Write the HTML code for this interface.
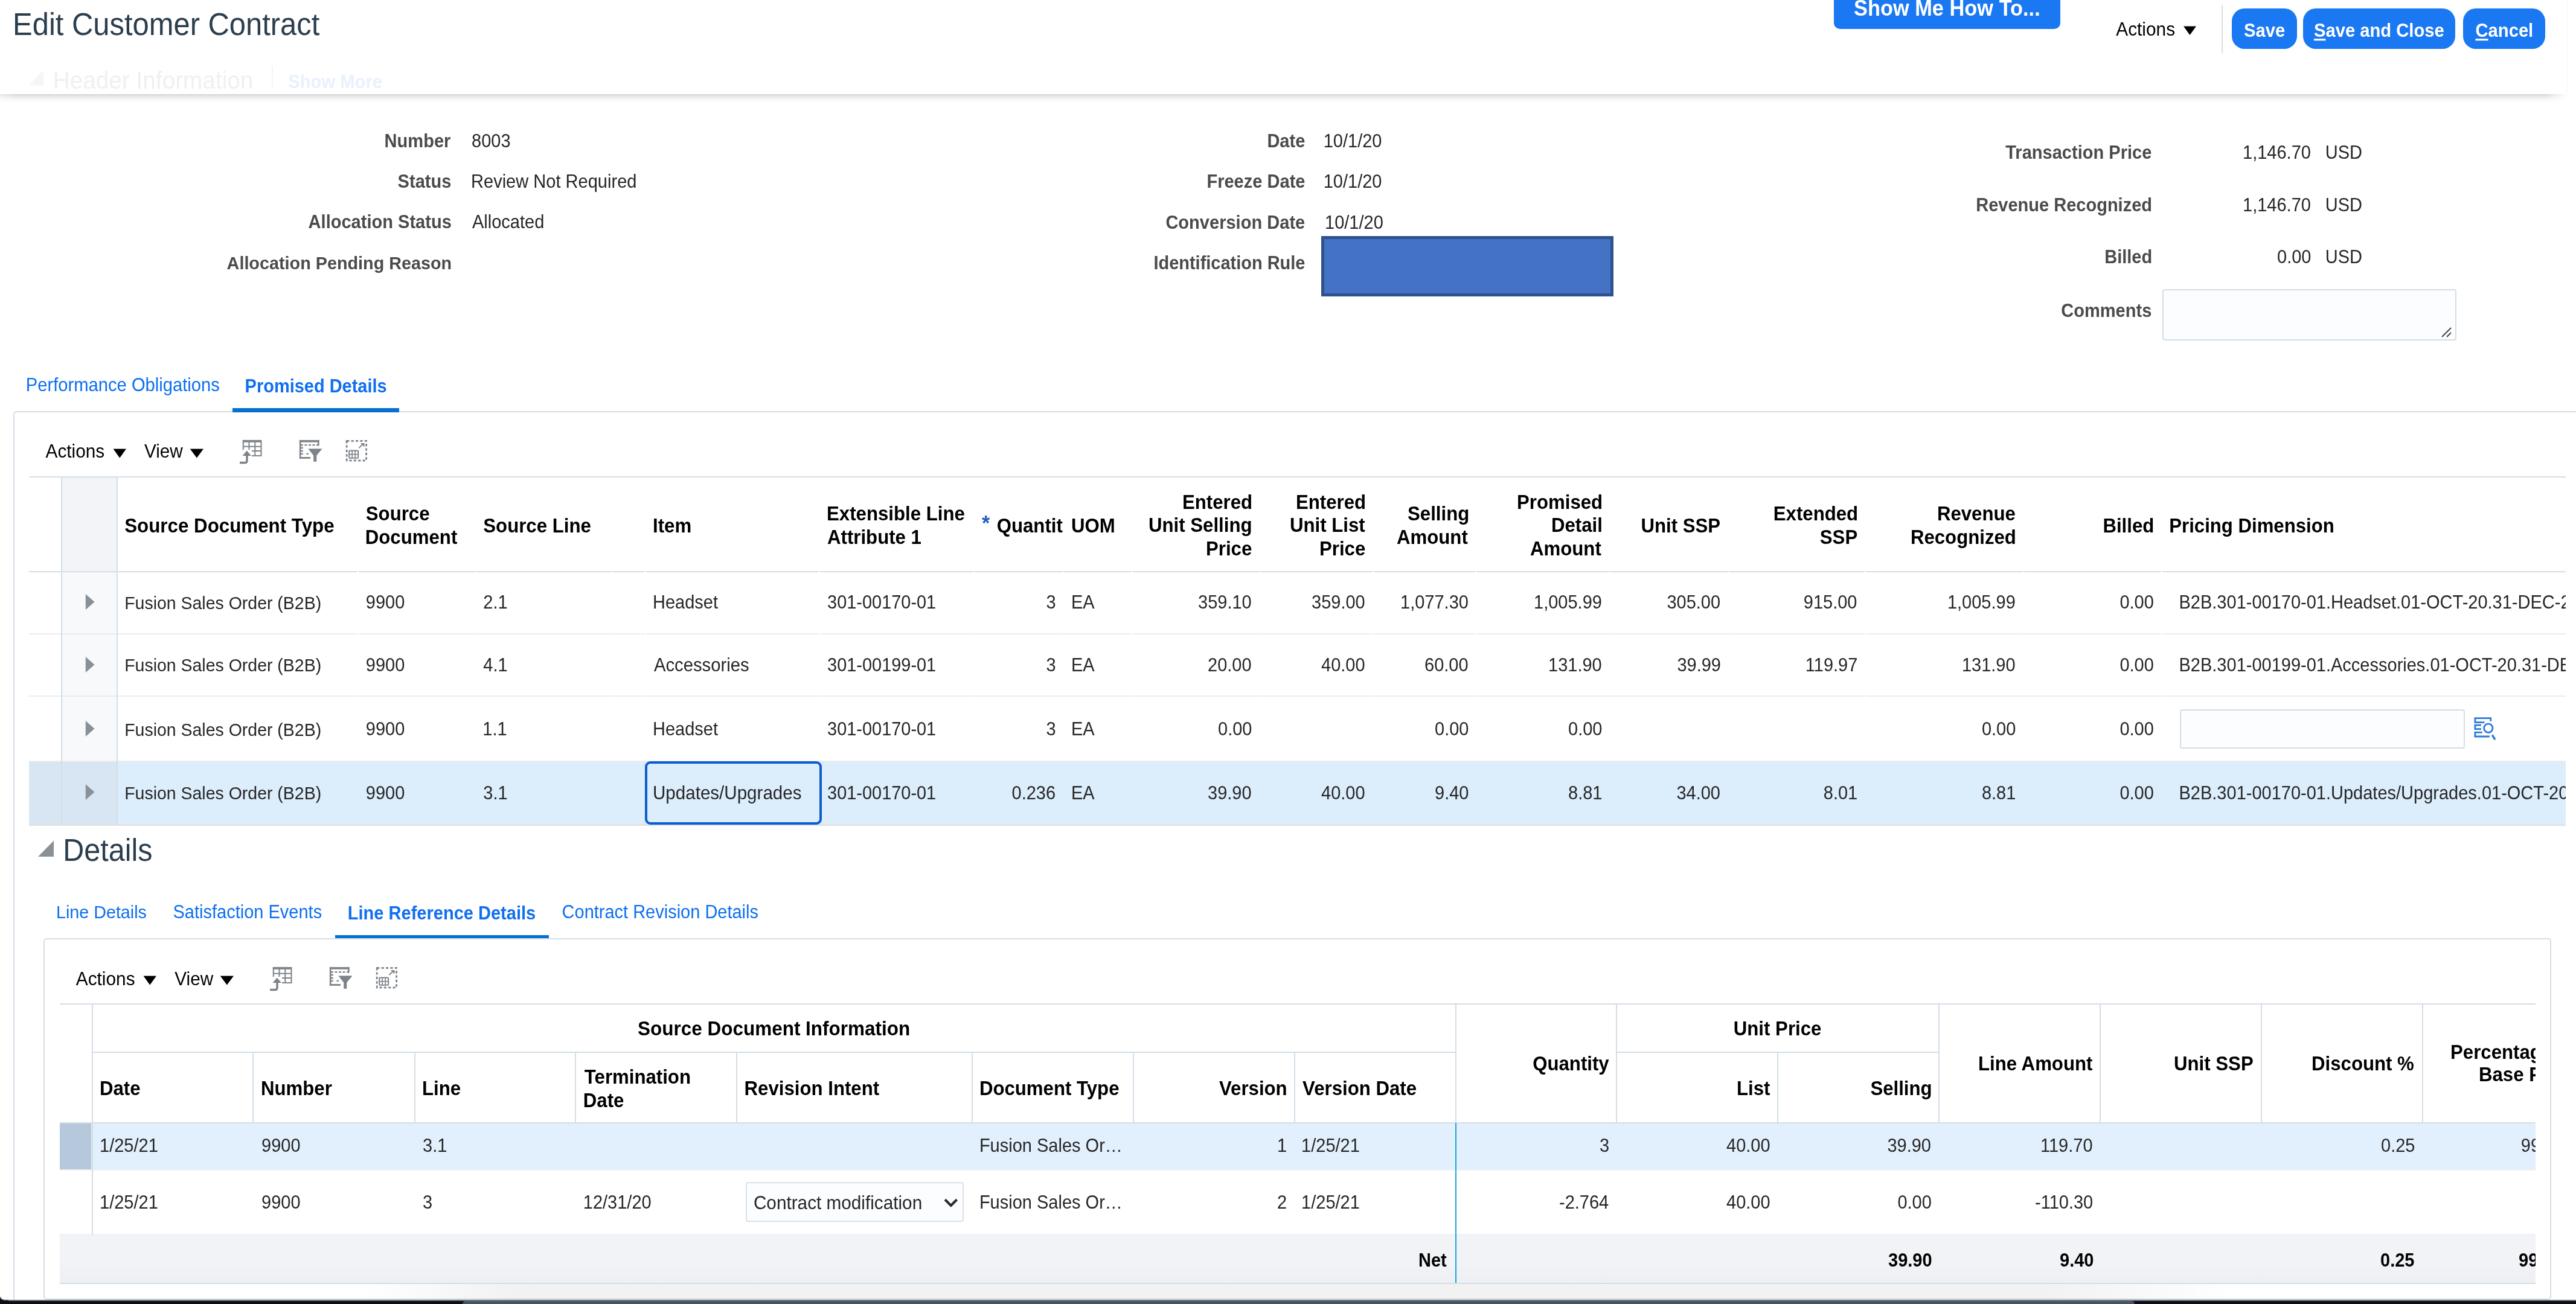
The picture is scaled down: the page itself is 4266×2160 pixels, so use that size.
<!DOCTYPE html>
<html><head><meta charset="utf-8"><title>Edit Customer Contract</title>
<style>
html,body{margin:0;padding:0;}
body{width:4266px;height:2160px;position:relative;overflow:hidden;background:#fff;font-family:"Liberation Sans", sans-serif;}
.t{position:absolute;white-space:pre;}
.r{position:absolute;}
svg.r{overflow:visible;}
</style></head><body>
<div class="t" style="top:16.60px;font-size:48.91px;line-height:48.91px;color:#2b3e4e;left:21.10px;transform:scaleY(1.055);transform-origin:0 41.40px;">Edit Customer Contract</div>
<svg class="r" style="left:0;top:0" width="500" height="160"><polygon points="47.6,141.4 72.1,116.2 72.1,141.4" fill="#f6f6f7"/></svg>
<div class="t" style="top:115.29px;font-size:38.76px;line-height:38.76px;color:#eff0f2;left:87.70px;transform:scaleY(1.055);transform-origin:0 32.81px;">Header Information</div>
<div class="r" style="left:450.00px;top:109.00px;width:2.00px;height:35.00px;background:#f3f4f6"></div>
<div class="t" style="top:122.08px;font-size:29.2px;line-height:29.2px;color:#e9f1fd;font-weight:700;left:477.30px;transform:scaleY(1.055);transform-origin:0 24.72px;">Show More</div>
<div class="r" style="left:0.00px;top:156.00px;width:4252.00px;height:14.00px;background:linear-gradient(#d3d3d4 0px,#e4e4e5 3px,#f5f5f6 8px,#ffffff 14px);-webkit-mask-image:linear-gradient(90deg,rgba(0,0,0,0.6) 0px,#000 30px,#000 4215px,rgba(0,0,0,0) 4252px)"></div>
<div class="r" style="left:4250.50px;top:0.00px;width:1.50px;height:157.00px;background:#f6f7f8"></div>
<div class="r" style="left:3037.00px;top:-12.00px;width:375.00px;height:59.70px;background:#1a78f2;border-radius:10px"></div>
<div class="t" style="top:-2.61px;font-size:34.39px;line-height:34.39px;color:#fff;font-weight:700;left:3070.00px;transform:scaleY(1.055);transform-origin:0 29.11px;">Show Me How To...</div>
<div class="t" style="top:34.26px;font-size:29.82px;line-height:29.82px;color:#000;left:3504.30px;transform:scaleY(1.055);transform-origin:0 25.24px;">Actions</div>
<svg class="r" style="left:3610px;top:40px" width="30" height="22"><polygon points="6,3.5 27,3.5 16.5,18" fill="#000"/></svg>
<div class="r" style="left:3679.00px;top:7.50px;width:2.00px;height:80.50px;background:#d6dee6"></div>
<div class="r" style="left:3696.00px;top:14.40px;width:108.00px;height:67.10px;background:#1a78f2;border-radius:21px"></div>
<div class="t" style="top:37.48px;font-size:29.2px;line-height:29.2px;color:#fff;font-weight:700;left:3716.00px;transform:scaleY(1.055);transform-origin:0 24.72px;">Save</div>
<div class="r" style="left:3814.00px;top:14.40px;width:252.00px;height:67.10px;background:#1a78f2;border-radius:21px"></div>
<div class="t" style="top:37.48px;font-size:29.2px;line-height:29.2px;color:#fff;font-weight:700;left:3832.00px;transform:scaleY(1.055);transform-origin:0 24.72px;"><span style="text-decoration:underline;text-underline-offset:3px;text-decoration-thickness:2.5px">S</span>ave and Close</div>
<div class="r" style="left:4079.00px;top:14.40px;width:136.00px;height:67.10px;background:#1a78f2;border-radius:21px"></div>
<div class="t" style="top:37.48px;font-size:29.2px;line-height:29.2px;color:#fff;font-weight:700;left:4099.50px;transform:scaleY(1.055);transform-origin:0 24.72px;"><span style="text-decoration:underline;text-underline-offset:3px;text-decoration-thickness:2.5px">C</span>ancel</div>
<div class="t" style="top:219.91px;font-size:29.05px;line-height:29.05px;color:#4b4b4b;font-weight:700;left:636.60px;transform:scaleY(1.055);transform-origin:0 24.59px;">Number</div>
<div class="t" style="top:219.95px;font-size:29.0px;line-height:29.0px;color:#262626;left:781.00px;transform:scaleY(1.055);transform-origin:0 24.55px;">8003</div>
<div class="t" style="top:286.61px;font-size:29.05px;line-height:29.05px;color:#4b4b4b;font-weight:700;left:658.60px;transform:scaleY(1.055);transform-origin:0 24.59px;">Status</div>
<div class="t" style="top:286.60px;font-size:29.06px;line-height:29.06px;color:#262626;left:780.00px;transform:scaleY(1.055);transform-origin:0 24.60px;">Review Not Required</div>
<div class="t" style="top:353.71px;font-size:29.05px;line-height:29.05px;color:#4b4b4b;font-weight:700;left:510.60px;transform:scaleY(1.055);transform-origin:0 24.59px;">Allocation Status</div>
<div class="t" style="top:353.75px;font-size:29.0px;line-height:29.0px;color:#262626;left:782.00px;transform:scaleY(1.055);transform-origin:0 24.55px;">Allocated</div>
<div class="t" style="top:421.53px;font-size:28.79px;line-height:28.79px;color:#4b4b4b;font-weight:700;left:375.60px;transform:scaleY(1.055);transform-origin:0 24.37px;">Allocation Pending Reason</div>
<div class="t" style="top:220.31px;font-size:29.05px;line-height:29.05px;color:#4b4b4b;font-weight:700;left:2098.40px;transform:scaleY(1.055);transform-origin:0 24.59px;">Date</div>
<div class="t" style="top:220.35px;font-size:29.0px;line-height:29.0px;color:#262626;left:2191.70px;transform:scaleY(1.055);transform-origin:0 24.55px;">10/1/20</div>
<div class="t" style="top:287.41px;font-size:29.05px;line-height:29.05px;color:#4b4b4b;font-weight:700;left:1998.40px;transform:scaleY(1.055);transform-origin:0 24.59px;">Freeze Date</div>
<div class="t" style="top:287.45px;font-size:29.0px;line-height:29.0px;color:#262626;left:2191.70px;transform:scaleY(1.055);transform-origin:0 24.55px;">10/1/20</div>
<div class="t" style="top:354.51px;font-size:29.05px;line-height:29.05px;color:#4b4b4b;font-weight:700;left:1930.40px;transform:scaleY(1.055);transform-origin:0 24.59px;">Conversion Date</div>
<div class="t" style="top:354.55px;font-size:29.0px;line-height:29.0px;color:#262626;left:2194.00px;transform:scaleY(1.055);transform-origin:0 24.55px;">10/1/20</div>
<div class="t" style="top:421.97px;font-size:28.98px;line-height:28.98px;color:#4b4b4b;font-weight:700;left:1910.40px;transform:scaleY(1.055);transform-origin:0 24.53px;">Identification Rule</div>
<div class="r" style="left:2188.00px;top:391.00px;width:484.00px;height:100.00px;background:#4472c4;border:5px solid #2f528f;box-sizing:border-box"></div>
<div class="t" style="top:238.71px;font-size:29.05px;line-height:29.05px;color:#4b4b4b;font-weight:700;left:3321.20px;transform:scaleY(1.055);transform-origin:0 24.59px;">Transaction Price</div>
<div class="t" style="top:238.75px;font-size:29.0px;line-height:29.0px;color:#262626;left:3714.00px;transform:scaleY(1.055);transform-origin:0 24.55px;">1,146.70</div>
<div class="t" style="top:238.75px;font-size:29.0px;line-height:29.0px;color:#262626;left:3850.70px;transform:scaleY(1.055);transform-origin:0 24.55px;">USD</div>
<div class="t" style="top:325.53px;font-size:29.03px;line-height:29.03px;color:#4b4b4b;font-weight:700;left:3272.20px;transform:scaleY(1.055);transform-origin:0 24.57px;">Revenue Recognized</div>
<div class="t" style="top:325.55px;font-size:29.0px;line-height:29.0px;color:#262626;left:3714.00px;transform:scaleY(1.055);transform-origin:0 24.55px;">1,146.70</div>
<div class="t" style="top:325.55px;font-size:29.0px;line-height:29.0px;color:#262626;left:3850.70px;transform:scaleY(1.055);transform-origin:0 24.55px;">USD</div>
<div class="t" style="top:412.31px;font-size:29.05px;line-height:29.05px;color:#4b4b4b;font-weight:700;left:3485.20px;transform:scaleY(1.055);transform-origin:0 24.59px;">Billed</div>
<div class="t" style="top:412.35px;font-size:29.0px;line-height:29.0px;color:#262626;left:3771.00px;transform:scaleY(1.055);transform-origin:0 24.55px;">0.00</div>
<div class="t" style="top:412.35px;font-size:29.0px;line-height:29.0px;color:#262626;left:3850.70px;transform:scaleY(1.055);transform-origin:0 24.55px;">USD</div>
<div class="t" style="top:500.81px;font-size:29.05px;line-height:29.05px;color:#4b4b4b;font-weight:700;left:3413.20px;transform:scaleY(1.055);transform-origin:0 24.59px;">Comments</div>
<div class="r" style="left:3581.00px;top:478.80px;width:487.00px;height:85.20px;background:#fcfdfe;border:2px solid #d4dee6;border-radius:4px;box-sizing:border-box"></div>
<svg class="r" style="left:4040px;top:538px" width="26" height="24"><line x1="4" y1="20" x2="19" y2="5" stroke="#444" stroke-width="2"/><line x1="12" y1="20" x2="19" y2="13" stroke="#444" stroke-width="2"/></svg>
<div class="t" style="top:623.80px;font-size:29.18px;line-height:29.18px;color:#0c6ff0;left:42.80px;transform:scaleY(1.055);transform-origin:0 24.70px;">Performance Obligations</div>
<div class="t" style="top:626.17px;font-size:28.98px;line-height:28.98px;color:#106ff0;font-weight:700;left:405.60px;transform:scaleY(1.055);transform-origin:0 24.53px;">Promised Details</div>
<div class="r" style="left:22.00px;top:681.00px;width:4278.00px;height:1519.00px;border:2px solid #d4dee6;border-radius:5px;box-sizing:border-box"></div>
<div class="r" style="left:384.50px;top:675.60px;width:276.50px;height:7.40px;background:#0670d0"></div>
<div class="t" style="top:733.26px;font-size:29.82px;line-height:29.82px;color:#000;left:75.50px;transform:scaleY(1.055);transform-origin:0 25.24px;">Actions</div>
<svg class="r" style="left:184px;top:740px" width="30" height="22"><polygon points="3.5,3.5 25,3.5 14.25,18.5" fill="#000"/></svg>
<div class="t" style="top:733.36px;font-size:29.7px;line-height:29.7px;color:#000;left:239.00px;transform:scaleY(1.055);transform-origin:0 25.14px;">View</div>
<svg class="r" style="left:311px;top:740px" width="30" height="22"><polygon points="3.7,3.5 26,3.5 14.85,18.5" fill="#000"/></svg>
<svg class="r" style="left:385px;top:720px" width="240" height="55">
<g fill="none" stroke="#7d838a" stroke-width="2">
<rect x="17.8" y="9.9" width="29.7" height="25" />
<line x1="27.5" y1="10" x2="27.5" y2="35"/><line x1="37.3" y1="10" x2="37.3" y2="35"/>
<line x1="18" y1="19.6" x2="47" y2="19.6"/><line x1="18" y1="27" x2="47" y2="27"/>
</g>
<rect x="16.8" y="8.9" width="30.7" height="3.8" fill="#7d838a"/>
<rect x="16" y="25" width="16" height="16" fill="#fff"/>
<path d="M12.1 46.6 H20.5 Q24 46.6 24 43 V34" fill="none" stroke="#7d838a" stroke-width="3.5"/>
<polygon points="16.5,35 23.8,26.5 31,35" fill="#7d838a"/>
<rect x="110.9" y="8.9" width="32.6" height="3.7" fill="#7d838a"/>
<rect x="141" y="8.9" width="2.6" height="9.5" fill="#7d838a"/>
<rect x="110.9" y="8.9" width="2.6" height="30.8" fill="#7d838a"/>
<rect x="110.9" y="37" width="18.1" height="2.8" fill="#7d838a"/>
<g stroke="#7d838a" stroke-width="2.2" stroke-dasharray="4,2.5">
<line x1="113" y1="17.2" x2="143" y2="17.2"/>
<line x1="113" y1="21.9" x2="119" y2="21.9"/>
<line x1="113" y1="27" x2="119" y2="27"/>
<line x1="113" y1="31.7" x2="119" y2="31.7"/>
<line x1="122.5" y1="31.7" x2="126" y2="31.7"/>
</g>
<polygon points="125.3,23.3 148.6,23.3 139.3,34.5 139.3,44.7 134.2,44.7 134.2,34.5" fill="#7d838a"/>
<rect x="189.2" y="10.4" width="32.4" height="32.4" fill="none" stroke="#7d838a" stroke-width="2.8" stroke-dasharray="4.2,3.2"/>
<rect x="193.2" y="26.4" width="15" height="12.4" rx="1.5" fill="none" stroke="#7d838a" stroke-width="2"/>
<line x1="198.2" y1="26.4" x2="198.2" y2="38.8" stroke="#7d838a" stroke-width="1.6"/>
<line x1="203.2" y1="26.4" x2="203.2" y2="38.8" stroke="#7d838a" stroke-width="1.6"/>
<line x1="193.2" y1="32.6" x2="208.2" y2="32.6" stroke="#7d838a" stroke-width="1.6"/>
<line x1="209.5" y1="22" x2="216.5" y2="15" stroke="#7d838a" stroke-width="1.8"/>
<polygon points="212,14 218.5,14 218.5,20.5" fill="#7d838a"/>
</svg>
<div class="r" style="left:48.00px;top:789.00px;width:4201.00px;height:2.00px;background:#d4dee6"></div>
<div class="r" style="left:102.00px;top:791.00px;width:92.00px;height:155.00px;background:#f3f4f7"></div>
<div class="r" style="left:102.00px;top:947.00px;width:92.00px;height:102.60px;background:#f7f9fb"></div>
<div class="r" style="left:102.00px;top:1050.60px;width:92.00px;height:102.80px;background:#f7f9fb"></div>
<div class="r" style="left:102.00px;top:1154.40px;width:92.00px;height:106.60px;background:#f7f9fb"></div>
<div class="r" style="left:48.00px;top:1262.00px;width:4201.00px;height:103.00px;background:#dcedfc"></div>
<div class="r" style="left:48.00px;top:1262.00px;width:146.00px;height:103.00px;background:#d8e6f4"></div>
<div class="r" style="left:48.00px;top:945.50px;width:4201.00px;height:2.00px;background:#d4dee6"></div>
<div class="r" style="left:48.00px;top:1048.60px;width:4201.00px;height:2.00px;background:#ebecee"></div>
<div class="r" style="left:48.00px;top:1152.40px;width:4201.00px;height:2.00px;background:#ebecee"></div>
<div class="r" style="left:48.00px;top:1260.00px;width:4201.00px;height:2.00px;background:#ebecee"></div>
<div class="r" style="left:48.00px;top:1365.00px;width:4201.00px;height:2.50px;background:#dfe3e8"></div>
<div class="r" style="left:592.00px;top:945.30px;width:1.60px;height:2.40px;background:#fff"></div>
<div class="r" style="left:592.00px;top:1048.40px;width:1.60px;height:2.40px;background:#fff"></div>
<div class="r" style="left:592.00px;top:1152.20px;width:1.60px;height:2.40px;background:#fff"></div>
<div class="r" style="left:786.50px;top:945.30px;width:1.60px;height:2.40px;background:#fff"></div>
<div class="r" style="left:786.50px;top:1048.40px;width:1.60px;height:2.40px;background:#fff"></div>
<div class="r" style="left:786.50px;top:1152.20px;width:1.60px;height:2.40px;background:#fff"></div>
<div class="r" style="left:1012.90px;top:945.30px;width:1.60px;height:2.40px;background:#fff"></div>
<div class="r" style="left:1012.90px;top:1048.40px;width:1.60px;height:2.40px;background:#fff"></div>
<div class="r" style="left:1012.90px;top:1152.20px;width:1.60px;height:2.40px;background:#fff"></div>
<div class="r" style="left:1068.40px;top:945.30px;width:1.60px;height:2.40px;background:#fff"></div>
<div class="r" style="left:1068.40px;top:1048.40px;width:1.60px;height:2.40px;background:#fff"></div>
<div class="r" style="left:1068.40px;top:1152.20px;width:1.60px;height:2.40px;background:#fff"></div>
<div class="r" style="left:1356.20px;top:945.30px;width:1.60px;height:2.40px;background:#fff"></div>
<div class="r" style="left:1356.20px;top:1048.40px;width:1.60px;height:2.40px;background:#fff"></div>
<div class="r" style="left:1356.20px;top:1152.20px;width:1.60px;height:2.40px;background:#fff"></div>
<div class="r" style="left:1611.80px;top:945.30px;width:1.60px;height:2.40px;background:#fff"></div>
<div class="r" style="left:1611.80px;top:1048.40px;width:1.60px;height:2.40px;background:#fff"></div>
<div class="r" style="left:1611.80px;top:1152.20px;width:1.60px;height:2.40px;background:#fff"></div>
<div class="r" style="left:1760.70px;top:945.30px;width:1.60px;height:2.40px;background:#fff"></div>
<div class="r" style="left:1760.70px;top:1048.40px;width:1.60px;height:2.40px;background:#fff"></div>
<div class="r" style="left:1760.70px;top:1152.20px;width:1.60px;height:2.40px;background:#fff"></div>
<div class="r" style="left:1874.20px;top:945.30px;width:1.60px;height:2.40px;background:#fff"></div>
<div class="r" style="left:1874.20px;top:1048.40px;width:1.60px;height:2.40px;background:#fff"></div>
<div class="r" style="left:1874.20px;top:1152.20px;width:1.60px;height:2.40px;background:#fff"></div>
<div class="r" style="left:2085.60px;top:945.30px;width:1.60px;height:2.40px;background:#fff"></div>
<div class="r" style="left:2085.60px;top:1048.40px;width:1.60px;height:2.40px;background:#fff"></div>
<div class="r" style="left:2085.60px;top:1152.20px;width:1.60px;height:2.40px;background:#fff"></div>
<div class="r" style="left:2273.20px;top:945.30px;width:1.60px;height:2.40px;background:#fff"></div>
<div class="r" style="left:2273.20px;top:1048.40px;width:1.60px;height:2.40px;background:#fff"></div>
<div class="r" style="left:2273.20px;top:1152.20px;width:1.60px;height:2.40px;background:#fff"></div>
<div class="r" style="left:2443.40px;top:945.30px;width:1.60px;height:2.40px;background:#fff"></div>
<div class="r" style="left:2443.40px;top:1048.40px;width:1.60px;height:2.40px;background:#fff"></div>
<div class="r" style="left:2443.40px;top:1152.20px;width:1.60px;height:2.40px;background:#fff"></div>
<div class="r" style="left:2664.70px;top:945.30px;width:1.60px;height:2.40px;background:#fff"></div>
<div class="r" style="left:2664.70px;top:1048.40px;width:1.60px;height:2.40px;background:#fff"></div>
<div class="r" style="left:2664.70px;top:1152.20px;width:1.60px;height:2.40px;background:#fff"></div>
<div class="r" style="left:2861.50px;top:945.30px;width:1.60px;height:2.40px;background:#fff"></div>
<div class="r" style="left:2861.50px;top:1048.40px;width:1.60px;height:2.40px;background:#fff"></div>
<div class="r" style="left:2861.50px;top:1152.20px;width:1.60px;height:2.40px;background:#fff"></div>
<div class="r" style="left:3088.40px;top:945.30px;width:1.60px;height:2.40px;background:#fff"></div>
<div class="r" style="left:3088.40px;top:1048.40px;width:1.60px;height:2.40px;background:#fff"></div>
<div class="r" style="left:3088.40px;top:1152.20px;width:1.60px;height:2.40px;background:#fff"></div>
<div class="r" style="left:3350.50px;top:945.30px;width:1.60px;height:2.40px;background:#fff"></div>
<div class="r" style="left:3350.50px;top:1048.40px;width:1.60px;height:2.40px;background:#fff"></div>
<div class="r" style="left:3350.50px;top:1152.20px;width:1.60px;height:2.40px;background:#fff"></div>
<div class="r" style="left:3579.00px;top:945.30px;width:1.60px;height:2.40px;background:#fff"></div>
<div class="r" style="left:3579.00px;top:1048.40px;width:1.60px;height:2.40px;background:#fff"></div>
<div class="r" style="left:3579.00px;top:1152.20px;width:1.60px;height:2.40px;background:#fff"></div>
<div class="r" style="left:101.20px;top:790.00px;width:2.00px;height:576.00px;background:#d4dee6"></div>
<div class="r" style="left:192.50px;top:790.00px;width:2.00px;height:576.00px;background:#d4dee6"></div>
<div class="t" style="top:855.79px;font-size:31.32px;line-height:31.32px;color:#000;font-weight:700;left:206.20px;transform:scaleY(1.055);transform-origin:0 26.51px;">Source Document Type</div>
<div class="t" style="top:836.09px;font-size:31.2px;line-height:31.2px;color:#000;font-weight:700;left:605.80px;transform:scaleY(1.055);transform-origin:0 26.41px;">Source</div>
<div class="t" style="top:875.09px;font-size:31.2px;line-height:31.2px;color:#000;font-weight:700;left:604.80px;transform:scaleY(1.055);transform-origin:0 26.41px;">Document</div>
<div class="t" style="top:855.89px;font-size:31.2px;line-height:31.2px;color:#000;font-weight:700;left:800.30px;transform:scaleY(1.055);transform-origin:0 26.41px;">Source Line</div>
<div class="t" style="top:855.89px;font-size:31.2px;line-height:31.2px;color:#000;font-weight:700;left:1081.00px;transform:scaleY(1.055);transform-origin:0 26.41px;">Item</div>
<div class="t" style="top:836.09px;font-size:31.2px;line-height:31.2px;color:#000;font-weight:700;left:1369.00px;transform:scaleY(1.055);transform-origin:0 26.41px;">Extensible Line</div>
<div class="t" style="top:875.09px;font-size:31.2px;line-height:31.2px;color:#000;font-weight:700;left:1370.00px;transform:scaleY(1.055);transform-origin:0 26.41px;">Attribute 1</div>
<div class="t" style="top:848.72px;font-size:34px;line-height:34px;color:#1d5fb8;font-weight:700;left:1626.00px;transform:scaleY(1.055);transform-origin:0 28.78px;">*</div>
<div class="t" style="top:855.89px;font-size:31.2px;line-height:31.2px;color:#000;font-weight:700;left:1650.70px;transform:scaleY(1.055);transform-origin:0 26.41px;">Quantit</div>
<div class="t" style="top:855.89px;font-size:31.2px;line-height:31.2px;color:#000;font-weight:700;left:1774.00px;transform:scaleY(1.055);transform-origin:0 26.41px;">UOM</div>
<div class="t" style="top:816.79px;font-size:31.2px;line-height:31.2px;color:#000;font-weight:700;left:1958.00px;transform:scaleY(1.055);transform-origin:0 26.41px;">Entered</div>
<div class="t" style="top:855.29px;font-size:31.2px;line-height:31.2px;color:#000;font-weight:700;left:1902.00px;transform:scaleY(1.055);transform-origin:0 26.41px;">Unit Selling</div>
<div class="t" style="top:893.69px;font-size:31.2px;line-height:31.2px;color:#000;font-weight:700;left:1997.00px;transform:scaleY(1.055);transform-origin:0 26.41px;">Price</div>
<div class="t" style="top:816.79px;font-size:31.2px;line-height:31.2px;color:#000;font-weight:700;left:2146.00px;transform:scaleY(1.055);transform-origin:0 26.41px;">Entered</div>
<div class="t" style="top:855.29px;font-size:31.2px;line-height:31.2px;color:#000;font-weight:700;left:2136.00px;transform:scaleY(1.055);transform-origin:0 26.41px;">Unit List</div>
<div class="t" style="top:893.69px;font-size:31.2px;line-height:31.2px;color:#000;font-weight:700;left:2185.00px;transform:scaleY(1.055);transform-origin:0 26.41px;">Price</div>
<div class="t" style="top:836.09px;font-size:31.2px;line-height:31.2px;color:#000;font-weight:700;left:2331.00px;transform:scaleY(1.055);transform-origin:0 26.41px;">Selling</div>
<div class="t" style="top:875.09px;font-size:31.2px;line-height:31.2px;color:#000;font-weight:700;left:2313.00px;transform:scaleY(1.055);transform-origin:0 26.41px;">Amount</div>
<div class="t" style="top:816.79px;font-size:31.2px;line-height:31.2px;color:#000;font-weight:700;left:2512.00px;transform:scaleY(1.055);transform-origin:0 26.41px;">Promised</div>
<div class="t" style="top:855.29px;font-size:31.2px;line-height:31.2px;color:#000;font-weight:700;left:2569.00px;transform:scaleY(1.055);transform-origin:0 26.41px;">Detail</div>
<div class="t" style="top:893.69px;font-size:31.2px;line-height:31.2px;color:#000;font-weight:700;left:2534.00px;transform:scaleY(1.055);transform-origin:0 26.41px;">Amount</div>
<div class="t" style="top:855.89px;font-size:31.2px;line-height:31.2px;color:#000;font-weight:700;left:2717.40px;transform:scaleY(1.055);transform-origin:0 26.41px;">Unit SSP</div>
<div class="t" style="top:836.09px;font-size:31.2px;line-height:31.2px;color:#000;font-weight:700;left:2936.80px;transform:scaleY(1.055);transform-origin:0 26.41px;">Extended</div>
<div class="t" style="top:875.09px;font-size:31.2px;line-height:31.2px;color:#000;font-weight:700;left:3013.80px;transform:scaleY(1.055);transform-origin:0 26.41px;">SSP</div>
<div class="t" style="top:836.09px;font-size:31.2px;line-height:31.2px;color:#000;font-weight:700;left:3207.90px;transform:scaleY(1.055);transform-origin:0 26.41px;">Revenue</div>
<div class="t" style="top:875.09px;font-size:31.2px;line-height:31.2px;color:#000;font-weight:700;left:3163.90px;transform:scaleY(1.055);transform-origin:0 26.41px;">Recognized</div>
<div class="t" style="top:855.89px;font-size:31.2px;line-height:31.2px;color:#000;font-weight:700;left:3482.40px;transform:scaleY(1.055);transform-origin:0 26.41px;">Billed</div>
<div class="t" style="top:855.93px;font-size:31.15px;line-height:31.15px;color:#000;font-weight:700;left:3592.30px;transform:scaleY(1.055);transform-origin:0 26.37px;">Pricing Dimension</div>
<div class="t" style="top:984.59px;font-size:28.48px;line-height:28.48px;color:#262626;left:206.20px;transform:scaleY(1.055);transform-origin:0 24.11px;">Fusion Sales Order (B2B)</div>
<div class="t" style="top:984.15px;font-size:29.0px;line-height:29.0px;color:#262626;left:605.80px;transform:scaleY(1.055);transform-origin:0 24.55px;">9900</div>
<div class="t" style="top:984.15px;font-size:29.0px;line-height:29.0px;color:#262626;left:800.30px;transform:scaleY(1.055);transform-origin:0 24.55px;">2.1</div>
<div class="t" style="top:984.15px;font-size:29.0px;line-height:29.0px;color:#262626;left:1081.00px;transform:scaleY(1.055);transform-origin:0 24.55px;">Headset</div>
<div class="t" style="top:984.21px;font-size:28.93px;line-height:28.93px;color:#262626;left:1370.10px;transform:scaleY(1.055);transform-origin:0 24.49px;">301-00170-01</div>
<div class="t" style="top:984.15px;font-size:29.0px;line-height:29.0px;color:#262626;left:1732.50px;transform:scaleY(1.055);transform-origin:0 24.55px;">3</div>
<div class="t" style="top:984.15px;font-size:29.0px;line-height:29.0px;color:#262626;left:1774.00px;transform:scaleY(1.055);transform-origin:0 24.55px;">EA</div>
<div class="t" style="top:984.15px;font-size:29.0px;line-height:29.0px;color:#262626;left:1984.00px;transform:scaleY(1.055);transform-origin:0 24.55px;">359.10</div>
<div class="t" style="top:984.15px;font-size:29.0px;line-height:29.0px;color:#262626;left:2172.00px;transform:scaleY(1.055);transform-origin:0 24.55px;">359.00</div>
<div class="t" style="top:984.15px;font-size:29.0px;line-height:29.0px;color:#262626;left:2319.00px;transform:scaleY(1.055);transform-origin:0 24.55px;">1,077.30</div>
<div class="t" style="top:984.15px;font-size:29.0px;line-height:29.0px;color:#262626;left:2540.00px;transform:scaleY(1.055);transform-origin:0 24.55px;">1,005.99</div>
<div class="t" style="top:984.15px;font-size:29.0px;line-height:29.0px;color:#262626;left:2760.40px;transform:scaleY(1.055);transform-origin:0 24.55px;">305.00</div>
<div class="t" style="top:984.15px;font-size:29.0px;line-height:29.0px;color:#262626;left:2986.80px;transform:scaleY(1.055);transform-origin:0 24.55px;">915.00</div>
<div class="t" style="top:984.15px;font-size:29.0px;line-height:29.0px;color:#262626;left:3224.90px;transform:scaleY(1.055);transform-origin:0 24.55px;">1,005.99</div>
<div class="t" style="top:984.15px;font-size:29.0px;line-height:29.0px;color:#262626;left:3510.40px;transform:scaleY(1.055);transform-origin:0 24.55px;">0.00</div>
<div class="t" style="top:984.15px;font-size:29.0px;line-height:29.0px;color:#262626;left:3608.50px;transform:scaleY(1.055);transform-origin:0 24.55px;">B2B.301-00170-01.Headset.01-OCT-20.31-DEC-20</div>
<svg class="r" style="left:140px;top:982.0px" width="20" height="30"><polygon points="1.8,2 16.5,15 1.8,28" fill="#8a9097"/></svg>
<div class="t" style="top:1088.19px;font-size:28.48px;line-height:28.48px;color:#262626;left:206.20px;transform:scaleY(1.055);transform-origin:0 24.11px;">Fusion Sales Order (B2B)</div>
<div class="t" style="top:1087.75px;font-size:29.0px;line-height:29.0px;color:#262626;left:605.80px;transform:scaleY(1.055);transform-origin:0 24.55px;">9900</div>
<div class="t" style="top:1087.75px;font-size:29.0px;line-height:29.0px;color:#262626;left:800.30px;transform:scaleY(1.055);transform-origin:0 24.55px;">4.1</div>
<div class="t" style="top:1087.55px;font-size:29.24px;line-height:29.24px;color:#262626;left:1083.00px;transform:scaleY(1.055);transform-origin:0 24.75px;">Accessories</div>
<div class="t" style="top:1087.81px;font-size:28.93px;line-height:28.93px;color:#262626;left:1370.10px;transform:scaleY(1.055);transform-origin:0 24.49px;">301-00199-01</div>
<div class="t" style="top:1087.75px;font-size:29.0px;line-height:29.0px;color:#262626;left:1732.50px;transform:scaleY(1.055);transform-origin:0 24.55px;">3</div>
<div class="t" style="top:1087.75px;font-size:29.0px;line-height:29.0px;color:#262626;left:1774.00px;transform:scaleY(1.055);transform-origin:0 24.55px;">EA</div>
<div class="t" style="top:1087.75px;font-size:29.0px;line-height:29.0px;color:#262626;left:2000.00px;transform:scaleY(1.055);transform-origin:0 24.55px;">20.00</div>
<div class="t" style="top:1087.75px;font-size:29.0px;line-height:29.0px;color:#262626;left:2188.00px;transform:scaleY(1.055);transform-origin:0 24.55px;">40.00</div>
<div class="t" style="top:1087.75px;font-size:29.0px;line-height:29.0px;color:#262626;left:2359.00px;transform:scaleY(1.055);transform-origin:0 24.55px;">60.00</div>
<div class="t" style="top:1087.75px;font-size:29.0px;line-height:29.0px;color:#262626;left:2564.00px;transform:scaleY(1.055);transform-origin:0 24.55px;">131.90</div>
<div class="t" style="top:1087.75px;font-size:29.0px;line-height:29.0px;color:#262626;left:2777.40px;transform:scaleY(1.055);transform-origin:0 24.55px;">39.99</div>
<div class="t" style="top:1087.75px;font-size:29.0px;line-height:29.0px;color:#262626;left:2989.80px;transform:scaleY(1.055);transform-origin:0 24.55px;">119.97</div>
<div class="t" style="top:1087.75px;font-size:29.0px;line-height:29.0px;color:#262626;left:3248.90px;transform:scaleY(1.055);transform-origin:0 24.55px;">131.90</div>
<div class="t" style="top:1087.75px;font-size:29.0px;line-height:29.0px;color:#262626;left:3510.40px;transform:scaleY(1.055);transform-origin:0 24.55px;">0.00</div>
<div class="t" style="top:1087.75px;font-size:29.0px;line-height:29.0px;color:#262626;left:3608.50px;transform:scaleY(1.055);transform-origin:0 24.55px;">B2B.301-00199-01.Accessories.01-OCT-20.31-DEC-20</div>
<svg class="r" style="left:140px;top:1085.8px" width="20" height="30"><polygon points="1.8,2 16.5,15 1.8,28" fill="#8a9097"/></svg>
<div class="t" style="top:1194.79px;font-size:28.48px;line-height:28.48px;color:#262626;left:206.20px;transform:scaleY(1.055);transform-origin:0 24.11px;">Fusion Sales Order (B2B)</div>
<div class="t" style="top:1194.35px;font-size:29.0px;line-height:29.0px;color:#262626;left:605.80px;transform:scaleY(1.055);transform-origin:0 24.55px;">9900</div>
<div class="t" style="top:1194.35px;font-size:29.0px;line-height:29.0px;color:#262626;left:799.30px;transform:scaleY(1.055);transform-origin:0 24.55px;">1.1</div>
<div class="t" style="top:1194.35px;font-size:29.0px;line-height:29.0px;color:#262626;left:1081.00px;transform:scaleY(1.055);transform-origin:0 24.55px;">Headset</div>
<div class="t" style="top:1194.41px;font-size:28.93px;line-height:28.93px;color:#262626;left:1370.10px;transform:scaleY(1.055);transform-origin:0 24.49px;">301-00170-01</div>
<div class="t" style="top:1194.35px;font-size:29.0px;line-height:29.0px;color:#262626;left:1732.50px;transform:scaleY(1.055);transform-origin:0 24.55px;">3</div>
<div class="t" style="top:1194.35px;font-size:29.0px;line-height:29.0px;color:#262626;left:1774.00px;transform:scaleY(1.055);transform-origin:0 24.55px;">EA</div>
<div class="t" style="top:1194.35px;font-size:29.0px;line-height:29.0px;color:#262626;left:2017.00px;transform:scaleY(1.055);transform-origin:0 24.55px;">0.00</div>
<div class="t" style="top:1194.35px;font-size:29.0px;line-height:29.0px;color:#262626;left:2376.00px;transform:scaleY(1.055);transform-origin:0 24.55px;">0.00</div>
<div class="t" style="top:1194.35px;font-size:29.0px;line-height:29.0px;color:#262626;left:2597.00px;transform:scaleY(1.055);transform-origin:0 24.55px;">0.00</div>
<div class="t" style="top:1194.35px;font-size:29.0px;line-height:29.0px;color:#262626;left:3281.90px;transform:scaleY(1.055);transform-origin:0 24.55px;">0.00</div>
<div class="t" style="top:1194.35px;font-size:29.0px;line-height:29.0px;color:#262626;left:3510.40px;transform:scaleY(1.055);transform-origin:0 24.55px;">0.00</div>
<svg class="r" style="left:140px;top:1191.6px" width="20" height="30"><polygon points="1.8,2 16.5,15 1.8,28" fill="#8a9097"/></svg>
<div class="t" style="top:1300.39px;font-size:28.48px;line-height:28.48px;color:#262626;left:206.20px;transform:scaleY(1.055);transform-origin:0 24.11px;">Fusion Sales Order (B2B)</div>
<div class="t" style="top:1299.95px;font-size:29.0px;line-height:29.0px;color:#262626;left:605.80px;transform:scaleY(1.055);transform-origin:0 24.55px;">9900</div>
<div class="t" style="top:1299.95px;font-size:29.0px;line-height:29.0px;color:#262626;left:800.30px;transform:scaleY(1.055);transform-origin:0 24.55px;">3.1</div>
<div class="t" style="top:1299.47px;font-size:29.57px;line-height:29.57px;color:#262626;left:1081.00px;transform:scaleY(1.055);transform-origin:0 25.03px;">Updates/Upgrades</div>
<div class="t" style="top:1300.01px;font-size:28.93px;line-height:28.93px;color:#262626;left:1370.10px;transform:scaleY(1.055);transform-origin:0 24.49px;">301-00170-01</div>
<div class="t" style="top:1299.95px;font-size:29.0px;line-height:29.0px;color:#262626;left:1675.50px;transform:scaleY(1.055);transform-origin:0 24.55px;">0.236</div>
<div class="t" style="top:1299.95px;font-size:29.0px;line-height:29.0px;color:#262626;left:1774.00px;transform:scaleY(1.055);transform-origin:0 24.55px;">EA</div>
<div class="t" style="top:1299.95px;font-size:29.0px;line-height:29.0px;color:#262626;left:2000.00px;transform:scaleY(1.055);transform-origin:0 24.55px;">39.90</div>
<div class="t" style="top:1299.95px;font-size:29.0px;line-height:29.0px;color:#262626;left:2188.00px;transform:scaleY(1.055);transform-origin:0 24.55px;">40.00</div>
<div class="t" style="top:1299.95px;font-size:29.0px;line-height:29.0px;color:#262626;left:2376.00px;transform:scaleY(1.055);transform-origin:0 24.55px;">9.40</div>
<div class="t" style="top:1299.95px;font-size:29.0px;line-height:29.0px;color:#262626;left:2597.00px;transform:scaleY(1.055);transform-origin:0 24.55px;">8.81</div>
<div class="t" style="top:1299.95px;font-size:29.0px;line-height:29.0px;color:#262626;left:2776.40px;transform:scaleY(1.055);transform-origin:0 24.55px;">34.00</div>
<div class="t" style="top:1299.95px;font-size:29.0px;line-height:29.0px;color:#262626;left:3019.80px;transform:scaleY(1.055);transform-origin:0 24.55px;">8.01</div>
<div class="t" style="top:1299.95px;font-size:29.0px;line-height:29.0px;color:#262626;left:3281.90px;transform:scaleY(1.055);transform-origin:0 24.55px;">8.81</div>
<div class="t" style="top:1299.95px;font-size:29.0px;line-height:29.0px;color:#262626;left:3510.40px;transform:scaleY(1.055);transform-origin:0 24.55px;">0.00</div>
<div class="t" style="top:1299.95px;font-size:29.0px;line-height:29.0px;color:#262626;left:3608.50px;transform:scaleY(1.055);transform-origin:0 24.55px;">B2B.301-00170-01.Updates/Upgrades.01-OCT-20.31-DEC-20</div>
<svg class="r" style="left:140px;top:1297.0px" width="20" height="30"><polygon points="1.8,2 16.5,15 1.8,28" fill="#8a9097"/></svg>
<div class="r" style="left:4249.00px;top:950.00px;width:17.00px;height:420.00px;background:#fff"></div>
<div class="r" style="left:3610.20px;top:1174.80px;width:471.80px;height:65.20px;background:#fcfdfe;border:2px solid #d4dee6;border-radius:4px;box-sizing:border-box"></div>
<svg class="r" style="left:4085px;top:1180px" width="60" height="55">
<g fill="none" stroke="#2b7bd6" stroke-width="2.8" stroke-linejoin="miter">
<polyline points="29.5,16.7 13.9,16.7 13.9,9.6 39.7,9.6 39.7,14.8"/>
<polyline points="24,21.2 13.9,21.2 13.9,27.7 24,27.7"/>
<polyline points="25.7,33.1 13.9,33.1 13.9,40 37.9,40"/>
<circle cx="35.8" cy="26.1" r="7.2"/>
</g>
<line x1="42.2" y1="37.5" x2="47" y2="45.2" stroke="#2b7bd6" stroke-width="3.4"/>
</svg>
<div class="r" style="left:1067.50px;top:1260.50px;width:293.30px;height:105.50px;border:4.5px solid #0b5cd3;border-radius:9px;box-sizing:border-box"></div>
<svg class="r" style="left:60px;top:1388px" width="34" height="34"><polygon points="3,31 29,4.6 29,31" fill="#8b9095"/></svg>
<div class="t" style="top:1385.14px;font-size:48.5px;line-height:48.5px;color:#2b3e4e;left:104.20px;transform:scaleY(1.055);transform-origin:0 41.06px;">Details</div>
<div class="t" style="top:1497.01px;font-size:28.69px;line-height:28.69px;color:#0c6ff0;left:93.00px;transform:scaleY(1.055);transform-origin:0 24.29px;">Line Details</div>
<div class="t" style="top:1496.74px;font-size:29.01px;line-height:29.01px;color:#0c6ff0;left:286.50px;transform:scaleY(1.055);transform-origin:0 24.56px;">Satisfaction Events</div>
<div class="t" style="top:1498.92px;font-size:29.04px;line-height:29.04px;color:#106ff0;font-weight:700;left:575.80px;transform:scaleY(1.055);transform-origin:0 24.58px;">Line Reference Details</div>
<div class="t" style="top:1496.76px;font-size:28.99px;line-height:28.99px;color:#0c6ff0;left:930.60px;transform:scaleY(1.055);transform-origin:0 24.54px;">Contract Revision Details</div>
<div class="r" style="left:555.30px;top:1549.20px;width:353.50px;height:6.80px;background:#0670d0"></div>
<div class="t" style="top:1606.66px;font-size:29.82px;line-height:29.82px;color:#000;left:125.80px;transform:scaleY(1.055);transform-origin:0 25.24px;">Actions</div>
<svg class="r" style="left:234.3px;top:1613.4px" width="30" height="22"><polygon points="3.5,3.5 25,3.5 14.25,18.5" fill="#000"/></svg>
<div class="t" style="top:1606.76px;font-size:29.7px;line-height:29.7px;color:#000;left:289.30px;transform:scaleY(1.055);transform-origin:0 25.14px;">View</div>
<svg class="r" style="left:361.3px;top:1613.4px" width="30" height="22"><polygon points="3.7,3.5 26,3.5 14.85,18.5" fill="#000"/></svg>
<svg class="r" style="left:435.3px;top:1593.4px" width="240" height="55">
<g fill="none" stroke="#7d838a" stroke-width="2">
<rect x="17.8" y="9.9" width="29.7" height="25" />
<line x1="27.5" y1="10" x2="27.5" y2="35"/><line x1="37.3" y1="10" x2="37.3" y2="35"/>
<line x1="18" y1="19.6" x2="47" y2="19.6"/><line x1="18" y1="27" x2="47" y2="27"/>
</g>
<rect x="16.8" y="8.9" width="30.7" height="3.8" fill="#7d838a"/>
<rect x="16" y="25" width="16" height="16" fill="#fff"/>
<path d="M12.1 46.6 H20.5 Q24 46.6 24 43 V34" fill="none" stroke="#7d838a" stroke-width="3.5"/>
<polygon points="16.5,35 23.8,26.5 31,35" fill="#7d838a"/>
<rect x="110.9" y="8.9" width="32.6" height="3.7" fill="#7d838a"/>
<rect x="141" y="8.9" width="2.6" height="9.5" fill="#7d838a"/>
<rect x="110.9" y="8.9" width="2.6" height="30.8" fill="#7d838a"/>
<rect x="110.9" y="37" width="18.1" height="2.8" fill="#7d838a"/>
<g stroke="#7d838a" stroke-width="2.2" stroke-dasharray="4,2.5">
<line x1="113" y1="17.2" x2="143" y2="17.2"/>
<line x1="113" y1="21.9" x2="119" y2="21.9"/>
<line x1="113" y1="27" x2="119" y2="27"/>
<line x1="113" y1="31.7" x2="119" y2="31.7"/>
<line x1="122.5" y1="31.7" x2="126" y2="31.7"/>
</g>
<polygon points="125.3,23.3 148.6,23.3 139.3,34.5 139.3,44.7 134.2,44.7 134.2,34.5" fill="#7d838a"/>
<rect x="189.2" y="10.4" width="32.4" height="32.4" fill="none" stroke="#7d838a" stroke-width="2.8" stroke-dasharray="4.2,3.2"/>
<rect x="193.2" y="26.4" width="15" height="12.4" rx="1.5" fill="none" stroke="#7d838a" stroke-width="2"/>
<line x1="198.2" y1="26.4" x2="198.2" y2="38.8" stroke="#7d838a" stroke-width="1.6"/>
<line x1="203.2" y1="26.4" x2="203.2" y2="38.8" stroke="#7d838a" stroke-width="1.6"/>
<line x1="193.2" y1="32.6" x2="208.2" y2="32.6" stroke="#7d838a" stroke-width="1.6"/>
<line x1="209.5" y1="22" x2="216.5" y2="15" stroke="#7d838a" stroke-width="1.8"/>
<polygon points="212,14 218.5,14 218.5,20.5" fill="#7d838a"/>
</svg>
<div class="r" style="left:98.60px;top:1662.00px;width:4100.40px;height:2.00px;background:#d4dee6"></div>
<div class="r" style="left:98.60px;top:1861.00px;width:4100.40px;height:76.50px;background:#e2f0fd"></div>
<div class="r" style="left:98.60px;top:1861.00px;width:52.90px;height:76.50px;background:#b6c8db"></div>
<div class="r" style="left:98.60px;top:2045.00px;width:4100.40px;height:79.50px;background:linear-gradient(#f2f3f6,#f2f3f6 60%,#eeeff2)"></div>
<div class="r" style="left:98.60px;top:2124.50px;width:4100.40px;height:2.00px;background:#d4dee6"></div>
<div class="r" style="left:98.60px;top:1859.00px;width:4100.40px;height:2.00px;background:#d4dee6"></div>
<div class="r" style="left:98.60px;top:1936.50px;width:4100.40px;height:2.00px;background:#eef1f4"></div>
<div class="r" style="left:98.60px;top:2044.00px;width:4100.40px;height:2.00px;background:#eef0f3"></div>
<div class="r" style="left:152.50px;top:1741.60px;width:2258.30px;height:2.00px;background:#d4dee6"></div>
<div class="r" style="left:2677.30px;top:1741.60px;width:534.00px;height:2.00px;background:#d4dee6"></div>
<div class="r" style="left:151.50px;top:1663.00px;width:2.00px;height:382.00px;background:#d4dee6"></div>
<div class="r" style="left:418.40px;top:1742.60px;width:2.00px;height:117.40px;background:#d4dee6"></div>
<div class="r" style="left:685.50px;top:1742.60px;width:2.00px;height:117.40px;background:#d4dee6"></div>
<div class="r" style="left:952.30px;top:1742.60px;width:2.00px;height:117.40px;background:#d4dee6"></div>
<div class="r" style="left:1219.40px;top:1742.60px;width:2.00px;height:117.40px;background:#d4dee6"></div>
<div class="r" style="left:1608.60px;top:1742.60px;width:2.00px;height:117.40px;background:#d4dee6"></div>
<div class="r" style="left:1876.10px;top:1742.60px;width:2.00px;height:117.40px;background:#d4dee6"></div>
<div class="r" style="left:2143.00px;top:1742.60px;width:2.00px;height:117.40px;background:#d4dee6"></div>
<div class="r" style="left:2943.30px;top:1742.60px;width:2.00px;height:117.40px;background:#d4dee6"></div>
<div class="r" style="left:2409.80px;top:1663.00px;width:2.00px;height:197.00px;background:#d4dee6"></div>
<div class="r" style="left:2676.30px;top:1663.00px;width:2.00px;height:197.00px;background:#d4dee6"></div>
<div class="r" style="left:3210.30px;top:1663.00px;width:2.00px;height:197.00px;background:#d4dee6"></div>
<div class="r" style="left:3477.10px;top:1663.00px;width:2.00px;height:197.00px;background:#d4dee6"></div>
<div class="r" style="left:3744.00px;top:1663.00px;width:2.00px;height:197.00px;background:#d4dee6"></div>
<div class="r" style="left:4011.00px;top:1663.00px;width:2.00px;height:197.00px;background:#d4dee6"></div>
<div class="r" style="left:2409.50px;top:1860.00px;width:2.50px;height:265.00px;background:#1ba3d9"></div>
<div class="t" style="top:1689.26px;font-size:31.47px;line-height:31.47px;color:#000;font-weight:700;left:1056.10px;transform:scaleY(1.055);transform-origin:0 26.64px;">Source Document Information</div>
<div class="t" style="top:1689.29px;font-size:31.2px;line-height:31.2px;color:#000;font-weight:700;left:2870.80px;transform:scaleY(1.055);transform-origin:0 26.41px;">Unit Price</div>
<div class="t" style="top:1788.29px;font-size:31.2px;line-height:31.2px;color:#000;font-weight:700;left:165.00px;transform:scaleY(1.055);transform-origin:0 26.41px;">Date</div>
<div class="t" style="top:1788.29px;font-size:31.2px;line-height:31.2px;color:#000;font-weight:700;left:432.00px;transform:scaleY(1.055);transform-origin:0 26.41px;">Number</div>
<div class="t" style="top:1788.29px;font-size:31.2px;line-height:31.2px;color:#000;font-weight:700;left:699.00px;transform:scaleY(1.055);transform-origin:0 26.41px;">Line</div>
<div class="t" style="top:1768.69px;font-size:31.2px;line-height:31.2px;color:#000;font-weight:700;left:967.80px;transform:scaleY(1.055);transform-origin:0 26.41px;">Termination</div>
<div class="t" style="top:1807.59px;font-size:31.2px;line-height:31.2px;color:#000;font-weight:700;left:965.80px;transform:scaleY(1.055);transform-origin:0 26.41px;">Date</div>
<div class="t" style="top:1788.30px;font-size:31.19px;line-height:31.19px;color:#000;font-weight:700;left:1232.60px;transform:scaleY(1.055);transform-origin:0 26.40px;">Revision Intent</div>
<div class="t" style="top:1788.29px;font-size:31.2px;line-height:31.2px;color:#000;font-weight:700;left:1621.90px;transform:scaleY(1.055);transform-origin:0 26.41px;">Document Type</div>
<div class="t" style="top:1788.29px;font-size:31.2px;line-height:31.2px;color:#000;font-weight:700;left:2019.00px;transform:scaleY(1.055);transform-origin:0 26.41px;">Version</div>
<div class="t" style="top:1788.29px;font-size:31.2px;line-height:31.2px;color:#000;font-weight:700;left:2157.10px;transform:scaleY(1.055);transform-origin:0 26.41px;">Version Date</div>
<div class="t" style="top:1747.09px;font-size:31.2px;line-height:31.2px;color:#000;font-weight:700;left:2538.20px;transform:scaleY(1.055);transform-origin:0 26.41px;">Quantity</div>
<div class="t" style="top:1788.29px;font-size:31.2px;line-height:31.2px;color:#000;font-weight:700;left:2876.00px;transform:scaleY(1.055);transform-origin:0 26.41px;">List</div>
<div class="t" style="top:1788.29px;font-size:31.2px;line-height:31.2px;color:#000;font-weight:700;left:3097.40px;transform:scaleY(1.055);transform-origin:0 26.41px;">Selling</div>
<div class="t" style="top:1747.09px;font-size:31.2px;line-height:31.2px;color:#000;font-weight:700;left:3276.00px;transform:scaleY(1.055);transform-origin:0 26.41px;">Line Amount</div>
<div class="t" style="top:1747.09px;font-size:31.2px;line-height:31.2px;color:#000;font-weight:700;left:3600.00px;transform:scaleY(1.055);transform-origin:0 26.41px;">Unit SSP</div>
<div class="t" style="top:1747.09px;font-size:31.2px;line-height:31.2px;color:#000;font-weight:700;left:3828.00px;transform:scaleY(1.055);transform-origin:0 26.41px;">Discount %</div>
<div class="t" style="top:1727.69px;font-size:31.2px;line-height:31.2px;color:#000;font-weight:700;left:4058.00px;transform:scaleY(1.055);transform-origin:0 26.41px;">Percentage of</div>
<div class="t" style="top:1764.59px;font-size:31.2px;line-height:31.2px;color:#000;font-weight:700;left:4105.00px;transform:scaleY(1.055);transform-origin:0 26.41px;">Base Price</div>
<div class="t" style="top:1884.15px;font-size:29.0px;line-height:29.0px;color:#262626;left:165.00px;transform:scaleY(1.055);transform-origin:0 24.55px;">1/25/21</div>
<div class="t" style="top:1884.15px;font-size:29.0px;line-height:29.0px;color:#262626;left:433.00px;transform:scaleY(1.055);transform-origin:0 24.55px;">9900</div>
<div class="t" style="top:1884.15px;font-size:29.0px;line-height:29.0px;color:#262626;left:700.00px;transform:scaleY(1.055);transform-origin:0 24.55px;">3.1</div>
<div class="t" style="top:1884.15px;font-size:29.0px;line-height:29.0px;color:#262626;left:1621.90px;transform:scaleY(1.055);transform-origin:0 24.55px;">Fusion Sales Or…</div>
<div class="t" style="top:1884.15px;font-size:29.0px;line-height:29.0px;color:#262626;left:2115.00px;transform:scaleY(1.055);transform-origin:0 24.55px;">1</div>
<div class="t" style="top:1884.15px;font-size:29.0px;line-height:29.0px;color:#262626;left:2155.10px;transform:scaleY(1.055);transform-origin:0 24.55px;">1/25/21</div>
<div class="t" style="top:1884.15px;font-size:29.0px;line-height:29.0px;color:#262626;left:2649.00px;transform:scaleY(1.055);transform-origin:0 24.55px;">3</div>
<div class="t" style="top:1884.15px;font-size:29.0px;line-height:29.0px;color:#262626;left:2859.00px;transform:scaleY(1.055);transform-origin:0 24.55px;">40.00</div>
<div class="t" style="top:1884.15px;font-size:29.0px;line-height:29.0px;color:#262626;left:3125.40px;transform:scaleY(1.055);transform-origin:0 24.55px;">39.90</div>
<div class="t" style="top:1884.15px;font-size:29.0px;line-height:29.0px;color:#262626;left:3379.00px;transform:scaleY(1.055);transform-origin:0 24.55px;">119.70</div>
<div class="t" style="top:1884.15px;font-size:29.0px;line-height:29.0px;color:#262626;left:3943.00px;transform:scaleY(1.055);transform-origin:0 24.55px;">0.25</div>
<div class="t" style="top:1884.15px;font-size:29.0px;line-height:29.0px;color:#262626;left:4174.80px;transform:scaleY(1.055);transform-origin:0 24.55px;">99.75</div>
<div class="t" style="top:1978.35px;font-size:29.0px;line-height:29.0px;color:#262626;left:165.00px;transform:scaleY(1.055);transform-origin:0 24.55px;">1/25/21</div>
<div class="t" style="top:1978.35px;font-size:29.0px;line-height:29.0px;color:#262626;left:433.00px;transform:scaleY(1.055);transform-origin:0 24.55px;">9900</div>
<div class="t" style="top:1978.35px;font-size:29.0px;line-height:29.0px;color:#262626;left:700.00px;transform:scaleY(1.055);transform-origin:0 24.55px;">3</div>
<div class="t" style="top:1978.35px;font-size:29.0px;line-height:29.0px;color:#262626;left:965.80px;transform:scaleY(1.055);transform-origin:0 24.55px;">12/31/20</div>
<div class="t" style="top:1978.35px;font-size:29.0px;line-height:29.0px;color:#262626;left:1621.90px;transform:scaleY(1.055);transform-origin:0 24.55px;">Fusion Sales Or…</div>
<div class="t" style="top:1978.35px;font-size:29.0px;line-height:29.0px;color:#262626;left:2115.00px;transform:scaleY(1.055);transform-origin:0 24.55px;">2</div>
<div class="t" style="top:1978.35px;font-size:29.0px;line-height:29.0px;color:#262626;left:2155.10px;transform:scaleY(1.055);transform-origin:0 24.55px;">1/25/21</div>
<div class="t" style="top:1978.35px;font-size:29.0px;line-height:29.0px;color:#262626;left:2582.00px;transform:scaleY(1.055);transform-origin:0 24.55px;">-2.764</div>
<div class="t" style="top:1978.35px;font-size:29.0px;line-height:29.0px;color:#262626;left:2859.00px;transform:scaleY(1.055);transform-origin:0 24.55px;">40.00</div>
<div class="t" style="top:1978.35px;font-size:29.0px;line-height:29.0px;color:#262626;left:3142.40px;transform:scaleY(1.055);transform-origin:0 24.55px;">0.00</div>
<div class="t" style="top:1978.35px;font-size:29.0px;line-height:29.0px;color:#262626;left:3370.00px;transform:scaleY(1.055);transform-origin:0 24.55px;">-110.30</div>
<div class="t" style="top:2074.15px;font-size:29.0px;line-height:29.0px;color:#000;font-weight:700;left:2349.00px;transform:scaleY(1.055);transform-origin:0 24.55px;">Net</div>
<div class="t" style="top:2074.15px;font-size:29.0px;line-height:29.0px;color:#000;font-weight:700;left:3127.00px;transform:scaleY(1.055);transform-origin:0 24.55px;">39.90</div>
<div class="t" style="top:2074.15px;font-size:29.0px;line-height:29.0px;color:#000;font-weight:700;left:3411.00px;transform:scaleY(1.055);transform-origin:0 24.55px;">9.40</div>
<div class="t" style="top:2074.15px;font-size:29.0px;line-height:29.0px;color:#000;font-weight:700;left:3942.00px;transform:scaleY(1.055);transform-origin:0 24.55px;">0.25</div>
<div class="t" style="top:2074.15px;font-size:29.0px;line-height:29.0px;color:#000;font-weight:700;left:4171.00px;transform:scaleY(1.055);transform-origin:0 24.55px;">99.75</div>
<div class="r" style="left:1234.60px;top:1958.30px;width:361.10px;height:65.90px;background:#fcfdfe;border:2px solid #dae1e7;border-radius:4px;box-sizing:border-box"></div>
<div class="t" style="top:1977.73px;font-size:29.74px;line-height:29.74px;color:#262626;left:1247.90px;transform:scaleY(1.055);transform-origin:0 25.17px;">Contract modification</div>
<svg class="r" style="left:1560px;top:1981.5px" width="30" height="24"><polyline points="5,5 14.8,15 24.6,5" fill="none" stroke="#2a2a2a" stroke-width="4"/></svg>
<div class="r" style="left:4199.00px;top:1665.00px;width:67.00px;height:485.00px;background:#fff"></div>
<div class="r" style="left:72.30px;top:1553.50px;width:4153.20px;height:599.00px;border:2px solid #d4dee6;border-radius:5px;box-sizing:border-box"></div>
<div class="r" style="left:600.00px;top:2127.00px;width:3100.00px;height:25.00px;background:linear-gradient(90deg,rgba(0,0,0,0) 0%,rgba(0,0,0,0.05) 8%,rgba(0,0,0,0.05) 90%,rgba(0,0,0,0) 100%)"></div>
<div class="r" style="left:0.00px;top:2153.00px;width:4266.00px;height:2.00px;background:#7a7c80"></div>
<div class="r" style="left:0.00px;top:2155.00px;width:4266.00px;height:5.00px;background:#0a0f17"></div>
<div class="r" style="left:766.00px;top:2155.00px;width:2769.00px;height:5.00px;background:#475365;border-radius:6px 6px 0 0"></div>
<svg class="r" style="left:0;top:2145px" width="14" height="15"><path d="M0 3 Q2 8.5 9 8.5 L14 8.5 L14 15 L0 15 Z" fill="#0a0f17"/><path d="M0 3 Q2 8.5 9 8.5 L14 8.5" fill="none" stroke="#7a7c80" stroke-width="1.5"/></svg>
</body></html>
